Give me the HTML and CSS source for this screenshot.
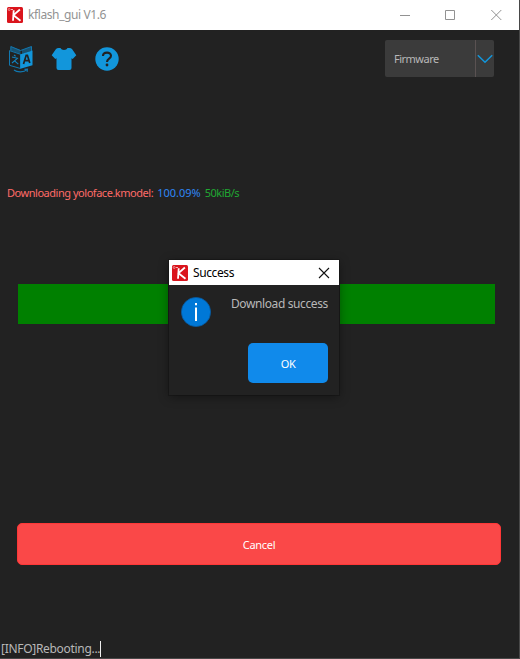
FILE: index.html
```html
<!DOCTYPE html>
<html lang="en">
<head>
<meta charset="utf-8">
<title>kflash_gui V1.6</title>
<link rel="stylesheet" href="styles.css">
</head>
<body>
<svg class="symbols" aria-hidden="true">
  <symbol id="logo" viewBox="0 0 16 16">
    <rect width="16" height="16" rx="1.5" fill="#da141c"/>
    <path d="M6.700 3.200L6 13.800M12.900 2.500L6.500 8.200L13.500 13.700" fill="none" stroke="#fff" stroke-width="1.800"/>
    <circle cx="2.200" cy="2.500" r="1" fill="none" stroke="#f6b5b7" stroke-width=".7"/>
    <path d="M4 2.500h2" stroke="#f6b5b7" stroke-width="1"/>
  </symbol>
</svg>
<div class="window">
  <header class="titlebar">
    <svg class="logo"><use href="#logo"/></svg>
    <span class="title">kflash_gui V1.6</span>
    <svg class="controls" viewBox="0 0 104 12" fill="none" stroke="#929292">
      <path d="M0 6.500h10M45.500 1.500h9v9h-9zM91.300 1l10 10M101.300 1l-10 10"/>
    </svg>
  </header>
  <main class="content">
    <div class="toolbar">
      <svg class="tool translate" viewBox="0 0 26 28">
        <path d="M2.800 5.500V1.500L12.500 5.500L23.500 1.500V6" fill="none" stroke="#1278b0"/>
        <path d="M3 1.500L12.500 5V9L3 5.800zM23.500 1.500L14 5V9L23.500 5.800z" fill="#1278b0" opacity=".55"/>
        <path d="M1.500 5.600L12.500 9.300V23.500L1.500 20.300z" fill="#222" stroke="#1278b0"/>
        <path d="M12.500 9.300L24.500 5.500V20.300L12.500 23.800z" fill="#1296db"/>
        <path d="M15.500 19L18.200 10.300h1.200L21.800 18M16.800 15.700h4" fill="none" stroke="#222" stroke-width="1.700"/>
        <path d="M6 10l1.600 1.300M4 12l5.400 1.300L4 18M6.300 15.600l4 3.600" fill="none" stroke="#1283c0" stroke-width="1.100"/>
        <path d="M6 25C9 27.600 16 27.500 19 24.700M16.500 24.400l3-.2-.4 2.600" fill="none" stroke="#1278b0" stroke-width="1.100"/>
      </svg>
      <svg class="tool shirt" viewBox="0 0 26 24">
        <path d="M7.500 1h2C10.500 3.500 15.500 3.500 16.500 1h2Q20 1 21 2L25.300 8.200L21.700 12L20.500 11.300V21Q20.500 23 18.500 23h-11Q5.500 23 5.500 21V11.300L4.300 12L.7 8.200L5 2Q6 1 7.500 1z" fill="#1296db"/>
      </svg>
      <svg class="tool help" viewBox="0 0 24 24">
        <circle cx="12" cy="12" r="11.700" fill="#1296db"/>
        <path d="M8 9C8 4.500 16 4.500 16 8.800C16 11.800 12 11.500 12 15" fill="none" stroke="#222" stroke-width="2.100"/>
        <circle cx="12" cy="18" r="1.400" fill="#222"/>
      </svg>
      <div class="combo">
        <span class="combo-label">Firmware</span>
        <span class="combo-arrow"><svg viewBox="0 0 16 10"><path d="M.8 1.300L8 8.300L15.200 1.300" fill="none" stroke="#1296db" stroke-width="1.500"/></svg></span>
      </div>
    </div>
    <p class="progress-text"><span class="file">Downloading yoloface.kmodel:</span><span class="percent">100.09%</span><span class="speed">50kiB/s</span></p>
    <div class="progress"></div>
    <button class="cancel">Cancel</button>
    <footer class="status"><span class="status-text">[INFO]Rebooting...</span><i class="caret"></i></footer>
  </main>
  <section class="dialog">
    <header class="dialog-title">
      <svg class="logo"><use href="#logo"/></svg>
      <span>Success</span>
      <svg class="dialog-close" viewBox="0 0 12 12"><path d="M1 1l10 10M11 1L1 11" stroke="#111" stroke-width="1.100"/></svg>
    </header>
    <div class="dialog-body">
      <div class="message">
        <svg class="info" viewBox="0 0 30 30">
          <circle cx="15" cy="15" r="14.600" fill="#0078d7" stroke="#075aa0" stroke-width=".8"/>
          <path d="M14 6h2v2.300h-2zM14 10.500h2V24h-2z" fill="#fff"/>
        </svg>
        <span>Download success</span>
      </div>
      <button class="ok">OK</button>
    </div>
  </section>
</div>
</body>
</html>
```
FILE: styles.css
```css
* { box-sizing: border-box; }
body { margin: 0; background: #222; font: 11px/16px "Noto Sans", "Open Sans", sans-serif; }
.symbols { display: none; }
svg { display: block; flex: none; }
button { border: 0; padding: 0; font: inherit; color: #fff; }
.window { position: relative; display: flex; flex-direction: column; width: 520px; height: 659px; border-right: 1px solid #484848; border-bottom: 1px solid #484848; background: #222; }
.titlebar { display: flex; align-items: center; height: 30px; padding: 0 17px 0 7px; background: #fff; flex: none; }
.logo { width: 16px; height: 16px; }
.title { margin-left: 5px; font-size: 12px; letter-spacing: -0.4px; color: #929292; }
.controls { width: 104px; height: 12px; margin-left: auto; margin-right: -2px; }
.content { display: flex; flex-direction: column; flex: 1; }
.toolbar { display: flex; align-items: center; height: 57px; padding: 0 25px 0 8px; }
.translate { width: 26px; height: 28px; }
.shirt { width: 26px; height: 24px; margin-left: 17px; }
.help { width: 24px; height: 24px; margin-left: 18px; }
.combo { display: flex; width: 109px; height: 37px; margin-left: auto; border-radius: 2px; background: #3b3b3b; color: #b8b8b8; }
.combo-label { flex: 1; padding-left: 9px; line-height: 38px; letter-spacing: -0.5px; }
.combo-arrow { display: flex; align-items: center; justify-content: center; width: 19px; border-left: 1px solid #5a5252; }
.combo-arrow svg { width: 16px; height: 10px; }
.progress-text { display: flex; gap: 4px; margin: 98px 0 0 7px; height: 16px; white-space: nowrap; }
.file { color: #ff6b68; letter-spacing: -0.47px; }
.percent { color: #2f87f5; }
.speed { color: #20a832; letter-spacing: -0.5px; }
.progress { height: 40px; margin: 83px 24px 0 18px; background: #008000; flex: none; }
.cancel { height: 42px; margin: 199px 18px 0 17px; border: 1px solid #ff3737; border-radius: 5px; background: #fa4848; padding-top: 2px; letter-spacing: -0.3px; flex: none; }
.status { display: flex; align-items: center; margin-top: auto; height: 18px; padding-left: 1px; font-size: 12px; letter-spacing: -0.3px; color: #b8b8b8; }
.caret { width: 1px; height: 16px; background: #eee; }
.dialog { position: absolute; left: 169px; top: 260px; width: 170px; height: 135px; background: #222; box-shadow: 0 2px 10px rgba(0, 0, 0, .4), 0 0 0 1px #1b1b1b; }
.dialog-title { display: flex; align-items: center; height: 25px; padding: 0 9px 0 3px; background: #fff; color: #000; font-size: 12px; letter-spacing: -0.4px; }
.dialog-title span { margin-left: 5px; }
.dialog-close { width: 12px; height: 12px; margin-left: auto; }
.dialog-body { display: flex; flex-direction: column; height: 110px; padding: 11px 11px 12px 12px; }
.message { display: flex; justify-content: space-between; font-size: 12px; letter-spacing: -0.38px; color: #b8b8b8; white-space: nowrap; }
.info { width: 30px; height: 30px; margin-top: 1px; }
.ok { width: 80px; height: 40px; margin: auto 0 0 auto; border-radius: 5px; background: #108aeb; padding-top: 2px; letter-spacing: -0.4px; }
```
